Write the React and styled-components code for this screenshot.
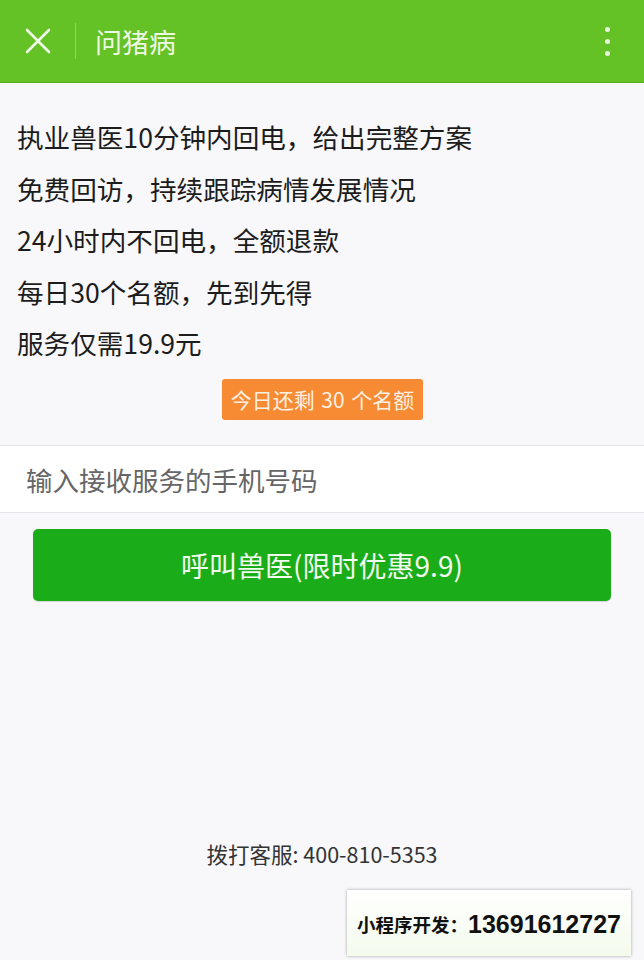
import React from "react";
import styled, { createGlobalStyle } from "styled-components";

const Global = createGlobalStyle`
  html, body { margin: 0; padding: 0; background: #f8f8fb; }
  body { font-family: "Noto Sans CJK SC", "Noto Sans", sans-serif; }
  * { box-sizing: border-box; }
`;

const Page = styled.div`
  width: 644px;
  height: 960px;
  display: flex;
  flex-direction: column;
  background: #f8f8fb;
  position: relative;
  overflow: hidden;
`;

const Header = styled.header`
  height: 83px;
  background: #64c226;
  border-bottom: 1px solid #5aad23;
  display: flex;
  align-items: center;
  padding: 0 0 0 24px;
`;

const IconButton = styled.div`
  width: 28px;
  height: 28px;
  display: flex;
  align-items: center;
  justify-content: center;
`;

const Divider = styled.div`
  width: 1px;
  height: 36px;
  background: rgba(255, 255, 255, 0.3);
  margin: 0 19px 0 23px;
`;

const Title = styled.h1`
  margin: 0;
  flex: 1;
  font-size: 27px;
  font-weight: 400;
  color: #eef9e4;
  line-height: 1;
`;

const Dots = styled.div`
  width: 8px;
  display: flex;
  flex-direction: column;
  align-items: center;
  gap: 7px;
  margin-right: 33px;
`;

const Dot = styled.span`
  width: 5px;
  height: 5px;
  border-radius: 50%;
  background: #e8f6dc;
`;

const Features = styled.ul`
  list-style: none;
  margin: 0;
  padding: 36px 0 0 17px;
  display: flex;
  flex-direction: column;
  gap: 16.5px;
`;

const Feature = styled.li`
  font-size: 26.6px;
  line-height: 35px;
  color: #1c1c1c;
`;

const BadgeRow = styled.div`
  display: flex;
  justify-content: center;
  padding: 19px 0 0 0;
`;

const Badge = styled.div`
  background: #f78b33;
  color: #fdf0e2;
  font-size: 21px;
  line-height: 41px;
  height: 41px;
  padding: 0 9px;
  border-radius: 3px;
  margin-left: 1px;
  word-spacing: 2px;
`;

const InputWrap = styled.div`
  margin-top: 25px;
  background: #ffffff;
  border-top: 1px solid #e6e6ea;
  border-bottom: 1px solid #e6e6ea;
  height: 68px;
  display: flex;
  align-items: center;
  padding: 0 26px;
`;

const PhoneInput = styled.input`
  border: none;
  outline: none;
  width: 100%;
  background: transparent;
  font-family: "Noto Sans CJK SC", "Noto Sans", sans-serif;
  font-size: 26.5px;
  color: #333;
  padding: 0;
  &::placeholder { color: #666; }
`;

const CallButton = styled.button`
  margin: 16px 33px 0 33px;
  height: 72px;
  border: none;
  border-radius: 5px;
  background: #1aad19;
  color: #f2fbef;
  font-family: "Noto Sans CJK SC", "Noto Sans", sans-serif;
  font-size: 28px;
  box-shadow: 0 1px 1px rgba(0,0,0,0.15);
`;

const Spacer = styled.div`
  flex: 1;
`;

const Footer = styled.div`
  text-align: center;
  font-size: 21.5px;
  color: #333;
  line-height: 28px;
  padding-bottom: 92px;
`;

const Watermark = styled.div`
  position: absolute;
  left: 347px;
  top: 890px;
  width: 284px;
  height: 66px;
  background: linear-gradient(#ffffff, #f3fbec);
  box-shadow: 0 0 3px rgba(0,0,0,0.35);
  display: flex;
  align-items: center;
  justify-content: center;
  font-weight: 700;
  color: #111;
  padding-top: 2px;
`;

const WmLabel = styled.span`
  font-size: 18.5px;
  font-family: "Noto Sans CJK SC", sans-serif;
`;

const WmNumber = styled.span`
  font-size: 25px;
  font-family: "Liberation Sans", Arial, sans-serif;
`;

export default function App() {
  const features = [
    "执业兽医10分钟内回电，给出完整方案",
    "免费回访，持续跟踪病情发展情况",
    "24小时内不回电，全额退款",
    "每日30个名额，先到先得",
    "服务仅需19.9元",
  ];
  return (
    <Page>
      <Global />
      <Header>
        <IconButton>
          <svg width="26" height="26" viewBox="0 0 26 26">
            <path d="M2 2 L24 24 M24 2 L2 24" stroke="#f2fbea" strokeWidth="2.6" strokeLinecap="round" />
          </svg>
        </IconButton>
        <Divider />
        <Title>问猪病</Title>
        <Dots>
          <Dot /><Dot /><Dot />
        </Dots>
      </Header>
      <Features>
        {features.map((f) => (
          <Feature key={f}>{f}</Feature>
        ))}
      </Features>
      <BadgeRow>
        <Badge>今日还剩 30 个名额</Badge>
      </BadgeRow>
      <InputWrap>
        <PhoneInput placeholder="输入接收服务的手机号码" />
      </InputWrap>
      <CallButton>呼叫兽医(限时优惠9.9)</CallButton>
      <Spacer />
      <Footer>拨打客服: 400-810-5353</Footer>
      <Watermark>
        <WmLabel>小程序开发：</WmLabel>
        <WmNumber>13691612727</WmNumber>
      </Watermark>
    </Page>
  );
}
